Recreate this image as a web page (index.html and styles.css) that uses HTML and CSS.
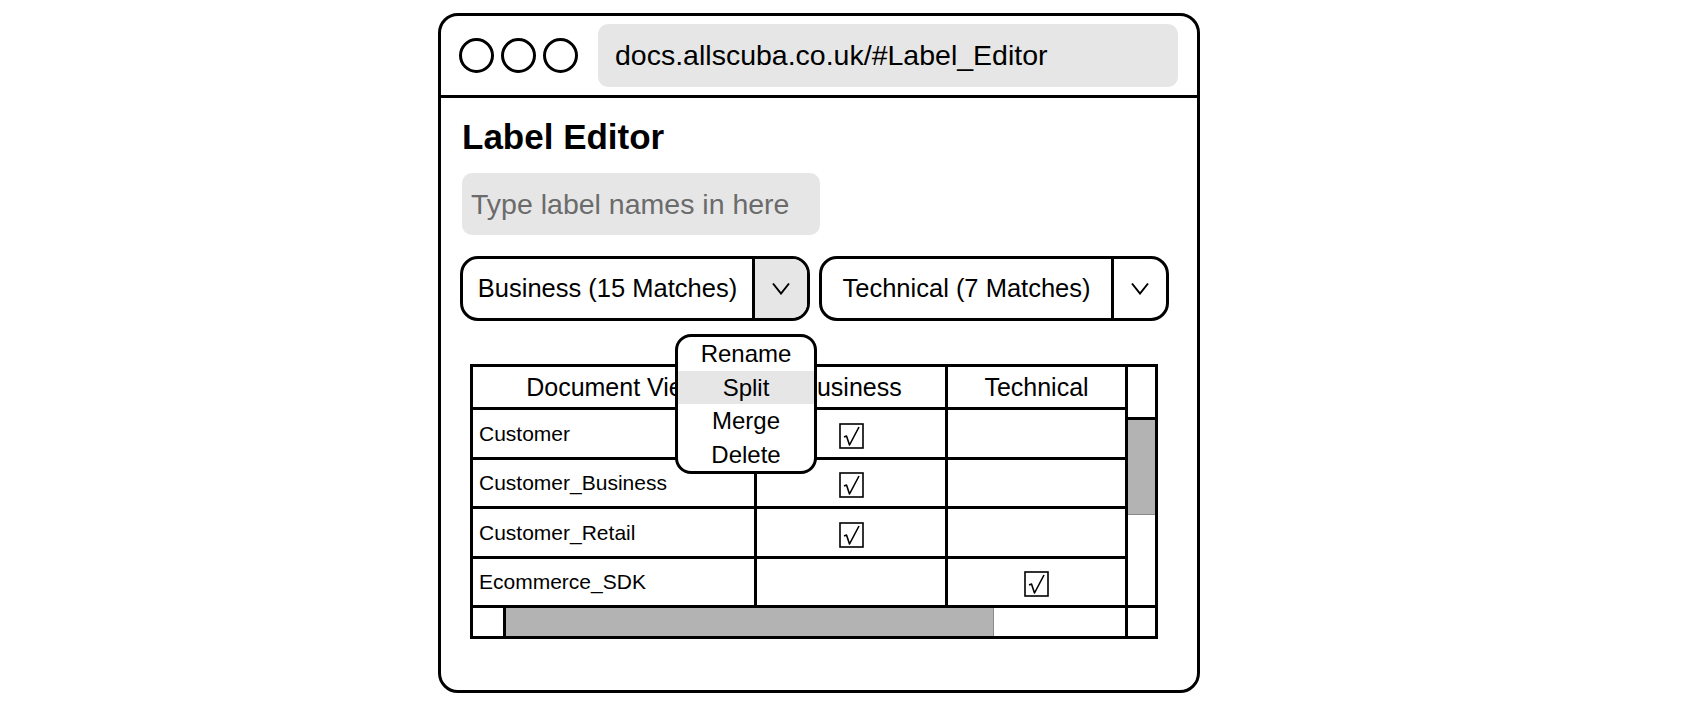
FILE: index.html
```html
<!DOCTYPE html>
<html lang="en">
<head>
  <meta charset="UTF-8" />
  <title>Label Editor</title>
  <meta name="viewport" content="width=device-width, initial-scale=1.0" />
  <link rel="stylesheet" href="styles.css">
</head>
<body>
  <div class="window">
    <div class="titlebar">
      <div class="dots">
        <span class="dot"></span>
        <span class="dot"></span>
        <span class="dot"></span>
      </div>
      <div class="urlbar">docs.allscuba.co.uk/#Label_Editor</div>
    </div>

    <div class="content">
      <h1 class="page-title">Label Editor</h1>
      <input class="label-input" type="text" placeholder="Type label names in here">

      <div class="filters">
        <div class="dropdown">
          <span class="dd-label">Business (15 Matches)</span>
          <span class="dd-arrow open">
            <svg width="18" height="13" viewBox="0 0 18 13"><path d="M1 1.5 L9 11.5 L17 1.5" fill="none" stroke="#000" stroke-width="2"/></svg>
          </span>
        </div>
        <div class="dropdown">
          <span class="dd-label">Technical (7 Matches)</span>
          <span class="dd-arrow">
            <svg width="18" height="13" viewBox="0 0 18 13"><path d="M1 1.5 L9 11.5 L17 1.5" fill="none" stroke="#000" stroke-width="2"/></svg>
          </span>
        </div>
      </div>

      <div class="datagrid">
        <div class="hcell">Document View</div>
        <div class="hcell">Business</div>
        <div class="hcell">Technical</div>
        <div class="vscroll">
          <div class="vscroll-top"></div>
          <div class="vscroll-thumb"></div>
        </div>

        <div class="cell name">Customer</div>
        <div class="cell mark">
          <svg class="check" width="25" height="26" viewBox="0 0 25 26"><rect x="1" y="1" width="23" height="24" fill="none" stroke="#000" stroke-width="1.6"/><path d="M5 14 L7.5 13 L10.5 22 L20 4" fill="none" stroke="#000" stroke-width="1.6" stroke-linejoin="round"/></svg>
        </div>
        <div class="cell mark"></div>

        <div class="cell name">Customer_Business</div>
        <div class="cell mark">
          <svg class="check" width="25" height="26" viewBox="0 0 25 26"><rect x="1" y="1" width="23" height="24" fill="none" stroke="#000" stroke-width="1.6"/><path d="M5 14 L7.5 13 L10.5 22 L20 4" fill="none" stroke="#000" stroke-width="1.6" stroke-linejoin="round"/></svg>
        </div>
        <div class="cell mark"></div>

        <div class="cell name">Customer_Retail</div>
        <div class="cell mark">
          <svg class="check" width="25" height="26" viewBox="0 0 25 26"><rect x="1" y="1" width="23" height="24" fill="none" stroke="#000" stroke-width="1.6"/><path d="M5 14 L7.5 13 L10.5 22 L20 4" fill="none" stroke="#000" stroke-width="1.6" stroke-linejoin="round"/></svg>
        </div>
        <div class="cell mark"></div>

        <div class="cell name">Ecommerce_SDK</div>
        <div class="cell mark"></div>
        <div class="cell mark">
          <svg class="check" width="25" height="26" viewBox="0 0 25 26"><rect x="1" y="1" width="23" height="24" fill="none" stroke="#000" stroke-width="1.6"/><path d="M5 14 L7.5 13 L10.5 22 L20 4" fill="none" stroke="#000" stroke-width="1.6" stroke-linejoin="round"/></svg>
        </div>

        <div class="hscroll">
          <div class="hscroll-left"></div>
          <div class="hscroll-thumb"></div>
        </div>
        <div class="corner"></div>
      </div>

      <ul class="context-menu">
        <li>Rename</li>
        <li class="active">Split</li>
        <li>Merge</li>
        <li>Delete</li>
      </ul>
    </div>
  </div>
</body>
</html>
```

FILE: styles.css
```css
:root {
  --line: #000;
  --fill: #e6e6e6;
  --thumb: #b3b3b3;
}

body {
  margin: 0;
  background: #fff;
  color: #000;
  font-family: 'Liberation Sans', Arial, sans-serif;
}

.window {
  width: 762px;
  height: 680px;
  margin: 13px 0 0 438px;
  border: 3px solid var(--line);
  border-radius: 20px;
  box-sizing: border-box;
  overflow: hidden;
}

/* === TITLE BAR === */
.titlebar {
  display: flex;
  align-items: center;
  padding: 8px 19px 8px 18px;
  border-bottom: 3px solid var(--line);
}

.dots {
  display: flex;
  gap: 7px;
}

.dot {
  width: 35px;
  height: 35px;
  border: 3px solid var(--line);
  border-radius: 50%;
  box-sizing: border-box;
}

.urlbar {
  flex: 1;
  height: 63px;
  margin-left: 20px;
  padding-left: 17px;
  display: flex;
  align-items: center;
  background: var(--fill);
  border-radius: 10px;
  font-size: 28.5px;
}

/* === CONTENT === */
.content {
  position: relative;
  padding: 18px 19px 0 19px;
}

.page-title {
  margin: 0 0 0 2px;
  font-size: 35px;
  line-height: 42px;
  font-weight: bold;
}

.label-input {
  display: block;
  width: 358px;
  height: 62px;
  margin: 15px 0 0 2px;
  padding: 0 9px;
  border: none;
  outline: none;
  border-radius: 10px;
  background: var(--fill);
  box-sizing: border-box;
  font-family: inherit;
  font-size: 28.5px;
  color: #000;
}

.label-input::placeholder {
  color: #6b6b6b;
}

.filters {
  display: flex;
  gap: 9px;
  margin-top: 21px;
}

.dropdown {
  display: flex;
  width: 350px;
  height: 65px;
  border: 3px solid var(--line);
  border-radius: 18px;
  box-sizing: border-box;
  overflow: hidden;
}

.dd-label {
  flex: 1;
  display: flex;
  align-items: center;
  justify-content: center;
  border-right: 3px solid var(--line);
  font-size: 25.5px;
}

.dd-arrow {
  width: 52px;
  display: flex;
  align-items: center;
  justify-content: center;
}

.dd-arrow.open {
  background: var(--fill);
}

/* === TABLE === */
.datagrid {
  display: grid;
  grid-template-columns: 284px 191px 180px 27px;
  grid-template-rows: 43px 50px 49px 50px 49px 28px;
  width: 688px;
  margin: 43px 0 0 10px;
  border: 3px solid var(--line);
  box-sizing: border-box;
}

.hcell,
.cell {
  display: flex;
  align-items: center;
  border-right: 3px solid var(--line);
  border-bottom: 3px solid var(--line);
}

.hcell {
  justify-content: center;
  font-size: 25px;
}

.cell.name {
  padding-left: 6px;
  font-size: 21px;
}

.cell.mark {
  justify-content: center;
}

.check {
  margin-top: 4px;
}

.vscroll {
  grid-column: 4;
  grid-row: 1 / 6;
  display: flex;
  flex-direction: column;
  border-bottom: 3px solid var(--line);
}

.vscroll-top {
  height: 50px;
  border-bottom: 3px solid var(--line);
}

.vscroll-thumb {
  height: 94px;
  background: var(--thumb);
  border-bottom: 1px solid #8a8a8a;
}

.hscroll {
  grid-column: 1 / 4;
  display: flex;
  border-right: 3px solid var(--line);
}

.hscroll-left {
  width: 30px;
  border-right: 3px solid var(--line);
}

.hscroll-thumb {
  width: 487px;
  background: var(--thumb);
  border-right: 1px solid #8a8a8a;
}

/* === CONTEXT MENU === */
.context-menu {
  position: absolute;
  left: 234px;
  top: 236px;
  width: 142px;
  margin: 0;
  padding: 0;
  list-style: none;
  background: #fff;
  border: 3px solid var(--line);
  border-radius: 16px;
  box-sizing: border-box;
  overflow: hidden;
}

.context-menu li {
  height: 33.5px;
  line-height: 33px;
  text-align: center;
  font-size: 24px;
}

.context-menu li.active {
  background: var(--fill);
}
```
